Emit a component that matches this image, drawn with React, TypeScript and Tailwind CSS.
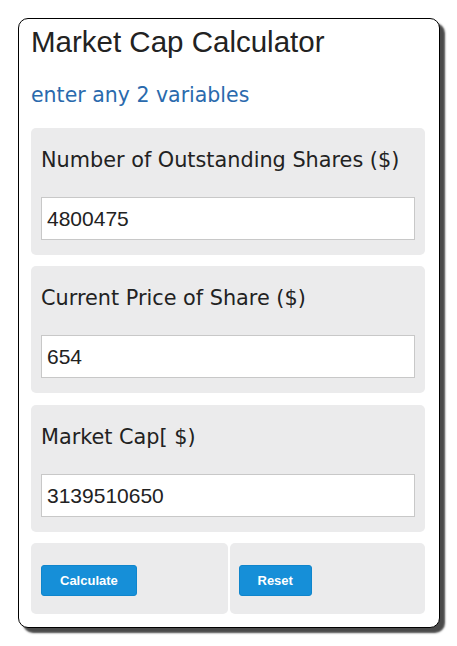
import React from "react";

const fields = [
  { label: "Number of Outstanding Shares ($)", value: "4800475", mt: "mt-[21px]" },
  { label: "Current Price of Share ($)", value: "654", mt: "mt-[11px]" },
  { label: "Market Cap[ $)", value: "3139510650", mt: "mt-[12px]" },
];

export default function App() {
  return (
    <div className="w-[457px] h-[646px] bg-white pt-[18px] pl-[18px]">
      <div className="w-[422px] h-[610px] bg-white border border-black rounded-[10px] shadow-[5px_5px_2px_#4a4a4a] pl-[12px] pt-[6px]">
        <h1 className="font-['Liberation_Sans',Arial,sans-serif] text-[29.5px] leading-[33px] text-[#222]">
          Market Cap Calculator
        </h1>
        <p className="mt-[25px] font-['DejaVu_Sans',Verdana,sans-serif] text-[20.5px] leading-[24px] text-[#2a6aad]">
          enter any 2 variables
        </p>
        {fields.map((f) => (
          <div
            key={f.label}
            className={`${f.mt} w-[394px] h-[127px] bg-[#ebebec] rounded-[5px] px-[10px] pt-[20px]`}
          >
            <div className="font-['DejaVu_Sans',Verdana,sans-serif] text-[20.8px] leading-[25px] text-[#222] whitespace-nowrap">
              {f.label}
            </div>
            <input
              readOnly
              value={f.value}
              className="mt-[24px] block w-[374px] h-[43px] bg-white border border-[#c8c8c8] pl-[5px] font-['Liberation_Sans',Arial,sans-serif] text-[21px] text-[#222] outline-none"
            />
          </div>
        ))}
        <div className="mt-[11px] w-[394px] h-[71px] flex gap-[2px]">
          <div className="flex-1 bg-[#ebebec] rounded-[5px] pl-[10px] pt-[22px]">
            <button className="h-[31px] px-[18px] bg-[#168fd8] border border-[#0f85cc] rounded-[3px] text-white font-bold text-[13px] font-['Liberation_Sans',Arial,sans-serif]">
              Calculate
            </button>
          </div>
          <div className="flex-1 bg-[#ebebec] rounded-[5px] pl-[9px] pt-[22px]">
            <button className="h-[31px] px-[18px] bg-[#168fd8] border border-[#0f85cc] rounded-[3px] text-white font-bold text-[13px] font-['Liberation_Sans',Arial,sans-serif]">
              Reset
            </button>
          </div>
        </div>
      </div>
    </div>
  );
}
